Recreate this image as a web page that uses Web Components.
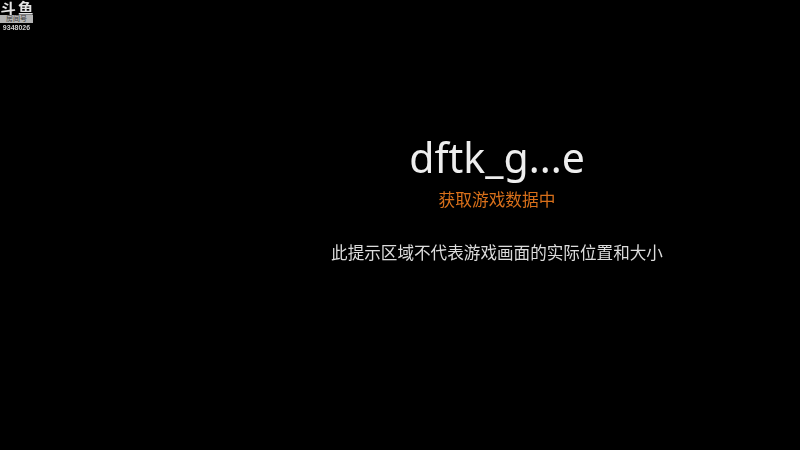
<!DOCTYPE html>
<html lang="zh">
<head>
<meta charset="utf-8">
<title>dftk_g...e</title>
<style>
  html, body { margin: 0; height: 100%; background: #000; }
</style>
</head>
<body>
<stream-screen>
  <room-badge slot="badge" room="9348026"></room-badge>
  <loading-tip name="dftk_g...e" status="获取游戏数据中" hint="此提示区域不代表游戏画面的实际位置和大小"></loading-tip>
</stream-screen>
<script>
const FONT = `"Noto Sans", "Noto Sans CJK SC", sans-serif`;

class StreamScreen extends HTMLElement {
  constructor() {
    super();
    this.attachShadow({ mode: "open" });
    this.shadowRoot.innerHTML = `
    <style>
      :host { display: block; position: relative; width: 800px; height: 450px; background: #000; overflow: hidden; }
      .stage { display: flex; justify-content: center; padding: 130px 0 0 194px; }
      ::slotted([slot="badge"]) { position: absolute; left: 0; top: 0; }
    </style>
    <slot name="badge"></slot>
    <div class="stage"><slot></slot></div>
    `;
  }
}

class RoomBadge extends HTMLElement {
  constructor() {
    super();
    this.attachShadow({ mode: "open" });
    this.shadowRoot.innerHTML = `
    <style>
      :host { display: flex; flex-direction: column; align-items: center; width: 33px; font-family: "Liberation Sans", "Noto Sans CJK SC", sans-serif; color: #e4e4e4; filter: blur(.35px); }
      .logo { font-size: 14px; line-height: 16px; height: 15px; font-weight: 700; white-space: nowrap; letter-spacing: 2px; margin-right: -2px; transform: scaleX(1.1); }
      .label { width: 100%; height: 8px; background: #b4b4b4; color: #3a3a3a; font-size: 7px; line-height: 8px; text-align: center; overflow: hidden; }
      .room { font-size: 7px; line-height: 9px; font-weight: 700; color: #d0d0d0; }
    </style>
    <div class="logo">斗鱼</div>
    <div class="label">房间号</div>
    <div class="room"></div>
    `;
    this.shadowRoot.querySelector(".room").textContent = this.getAttribute("room");
  }
}

class LoadingTip extends HTMLElement {
  constructor() {
    super();
    this.attachShadow({ mode: "open" });
    this.shadowRoot.innerHTML = `
    <style>
      :host { display: flex; flex-direction: column; align-items: center; font-family: ${FONT}; filter: blur(.4px); }
      .name { font-size: 41px; line-height: 54px; color: #eeeeee; }
      .status { margin-top: 3px; font-size: 16.7px; line-height: 26px; color: #d9701a; }
      .hint { margin-top: 27px; font-size: 16.6px; line-height: 26px; color: #dcdcdc; white-space: nowrap; }
    </style>
    <div class="name"></div>
    <div class="status"></div>
    <div class="hint"></div>
    `;
    this.shadowRoot.querySelector(".name").textContent = this.getAttribute("name");
    this.shadowRoot.querySelector(".status").textContent = this.getAttribute("status");
    this.shadowRoot.querySelector(".hint").textContent = this.getAttribute("hint");
  }
}

customElements.define("stream-screen", StreamScreen);
customElements.define("room-badge", RoomBadge);
customElements.define("loading-tip", LoadingTip);
</script>
</body>
</html>
